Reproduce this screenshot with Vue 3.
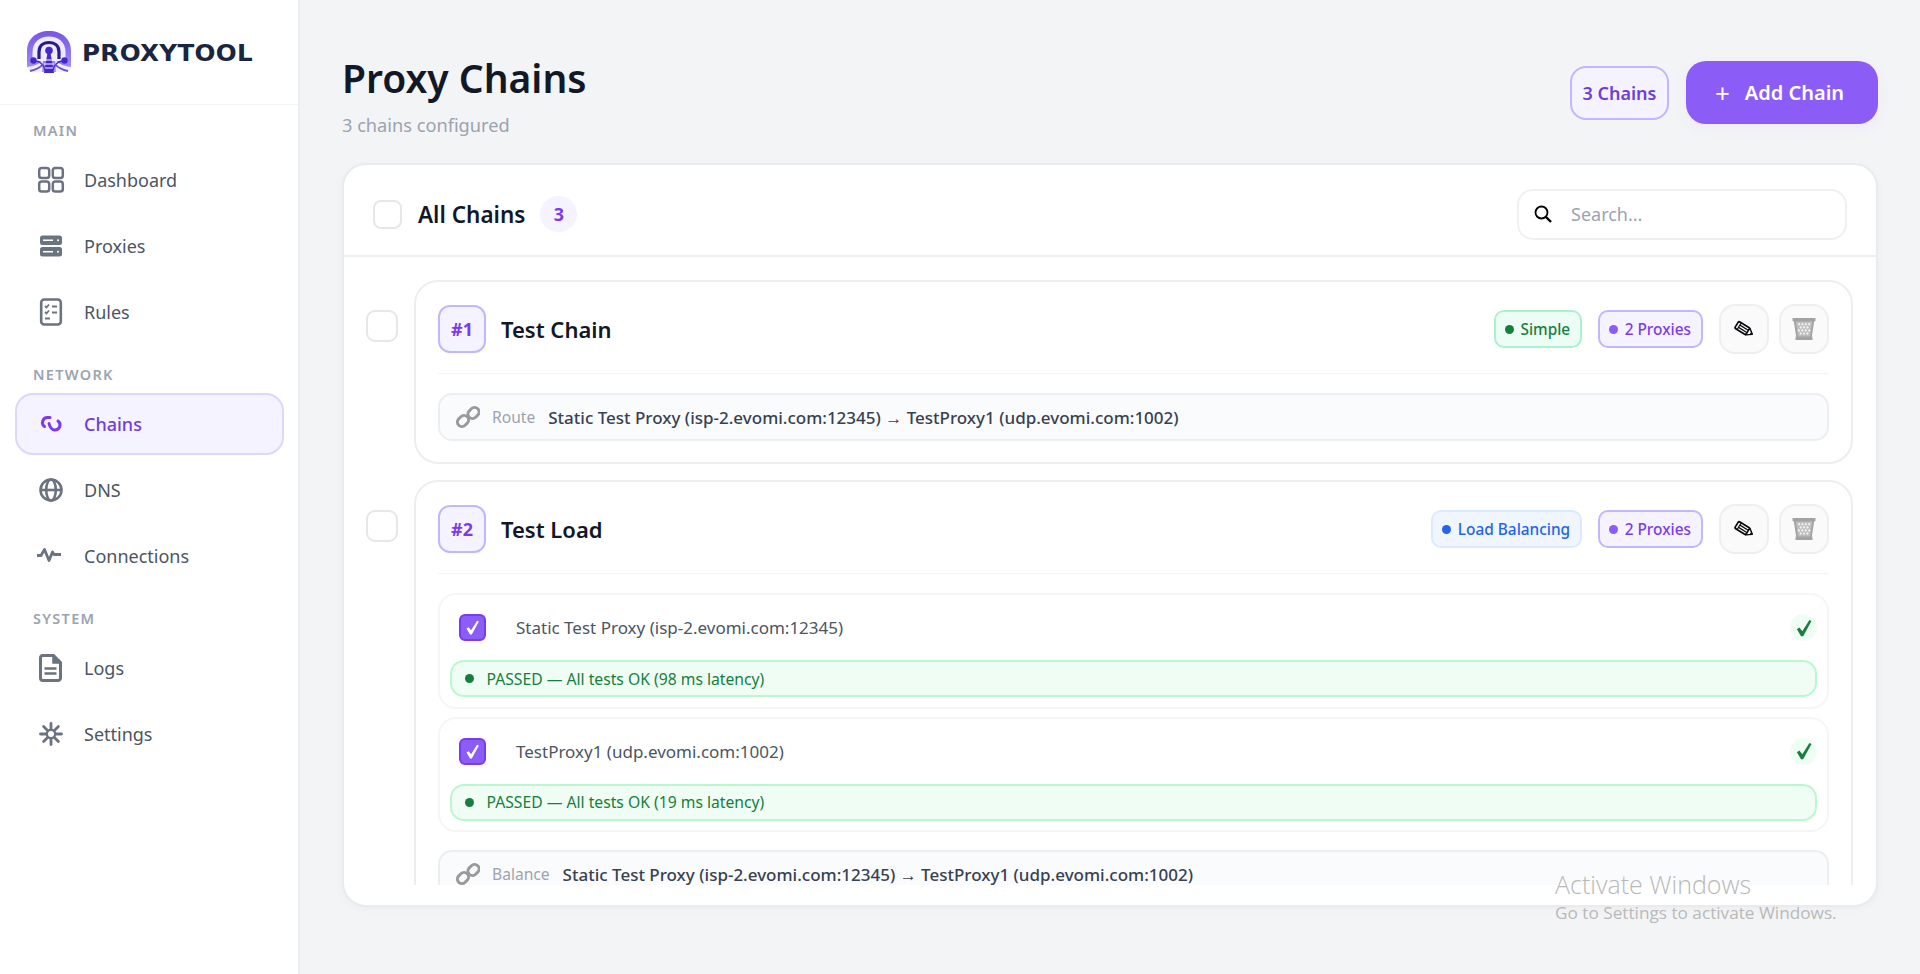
<script setup>
const navGroups = [
  {
    label: 'Main',
    items: [
      { name: 'Dashboard', icon: 'dashboard' },
      { name: 'Proxies', icon: 'proxies' },
      { name: 'Rules', icon: 'rules' },
    ],
  },
  {
    label: 'Network',
    items: [
      { name: 'Chains', icon: 'chains', active: true },
      { name: 'DNS', icon: 'dns' },
      { name: 'Connections', icon: 'connections' },
    ],
  },
  {
    label: 'System',
    items: [
      { name: 'Logs', icon: 'logs' },
      { name: 'Settings', icon: 'settings' },
    ],
  },
];

const proxies = [
  { name: 'Static Test Proxy (isp-2.evomi.com:12345)', latency: 98 },
  { name: 'TestProxy1 (udp.evomi.com:1002)', latency: 19 },
];

// white lattice of the bin, one diamond per grid cell
const binDiamonds = [];
for (let row = 0; row < 4; row++) {
  for (let col = 0; col < 4 - (row % 2); col++) {
    const x = 7 + col * 3.4 + (row % 2) * 1.7;
    const y = 7.2 + row * 3.1;
    binDiamonds.push(`M${x} ${y - 1.6}l1.300 1.600-1.300 1.600-1.300-1.600z`);
  }
}
</script>

<template>
  <div class="layout">
    <aside class="sidebar">
      <div class="brand">
        <svg class="logo" viewBox="0 0 44 42">
          <defs>
            <linearGradient id="logoFill" x1="0" y1="0" x2="0" y2="1">
              <stop offset="0" stop-color="#7656e4" />
              <stop offset="1" stop-color="#a68ffb" />
            </linearGradient>
          </defs>
          <path d="M0 20C0 8 9 0 22 0s22 8 22 20v14c0 4-3 7-7 7H7c-4 0-7-3-7-7z" fill="url(#logoFill)" />
          <path d="M5.500 30v-9C5.500 11 13 5.500 22 5.500S38.500 11 38.500 21v9z" fill="#efeaff" />
          <path d="M12 28v-7c0-6 4-9.500 10-9.500S32 15 32 21v7" fill="none" stroke="#251c8e" stroke-width="3.200" />
          <circle cx="22" cy="19.500" r="3.800" fill="#4529c8" />
          <path d="M20.500 22l-3.500 20h10l-3.500-20z" fill="#4529c8" />
          <path d="M18 29h8M17 33h10M16 37h12" stroke="#fff" stroke-width="1" />
          <path d="M0 36c8-1 13-3 16-8l-1 14H3z" fill="#fff" opacity="0.85" />
          <path d="M44 36c-8-1-13-3-16-8l1 14h12z" fill="#fff" opacity="0.85" />
          <path d="M8 30c5 0 8 3 10 9M36 30c-5 0-8 3-10 9" fill="none" stroke="#4529c8" stroke-width="1.500" />
          <path d="M3 40c5-1 10-3 13-7M41 40c-5-1-10-3-13-7" fill="none" stroke="#6a4fe0" stroke-width="1.800" />
          <circle cx="6.500" cy="29.500" r="3.200" fill="#4529c8" />
          <circle cx="37.500" cy="29.500" r="3.200" fill="#4529c8" />
        </svg>
        <span class="wordmark">PROXYTOOL</span>
      </div>

      <nav class="nav">
        <section v-for="group in navGroups" :key="group.label" class="nav-group">
          <h2 class="nav-label">{{ group.label }}</h2>
          <a
            v-for="item in group.items"
            :key="item.name"
            class="nav-item"
            :class="{ active: item.active }"
          >
            <svg class="nav-icon" viewBox="0 0 28 28">
              <g v-if="item.icon === 'dashboard'" fill="none" stroke="currentColor" stroke-width="2.500">
                <rect x="2.200" y="2" width="10" height="10" rx="2.600" />
                <rect x="15.800" y="2" width="10" height="10" rx="2.600" />
                <rect x="2.200" y="15.600" width="10" height="10" rx="2.600" />
                <rect x="15.800" y="15.600" width="10" height="10" rx="2.600" />
              </g>
              <g v-else-if="item.icon === 'proxies'">
                <rect x="3" y="3.500" width="22" height="9.500" rx="2.500" fill="currentColor" />
                <rect x="3" y="15" width="22" height="9.500" rx="2.500" fill="currentColor" />
                <path d="M6 8.200h10M6 19.800h10" stroke="#fff" stroke-width="1.400" />
                <circle cx="21" cy="8.200" r="1" fill="#fff" />
                <circle cx="21" cy="19.800" r="1" fill="#fff" />
              </g>
              <g v-else-if="item.icon === 'rules'" fill="none" stroke="currentColor">
                <rect x="4.200" y="1.500" width="19.600" height="25" rx="3" stroke-width="2.600" />
                <path d="M8 8l1.500 1.500L12 6.500M15 8.500h5M8 14l1.500 1.500L12 12.500M15 14.500h5M8 20.500h5" stroke-width="1.800" />
              </g>
              <g v-else-if="item.icon === 'chains'" fill="none" stroke="currentColor" stroke-width="3" stroke-linecap="round">
                <path d="M13 7.500h-2.500a5 5 0 0 0-3 9" />
                <path d="M12 13.500c1 4 3 6.500 6 6.500a5 5 0 0 0 3-9" />
              </g>
              <g v-else-if="item.icon === 'dns'" fill="none" stroke="currentColor" stroke-width="2.600">
                <circle cx="14" cy="14" r="10.500" />
                <ellipse cx="14" cy="14" rx="4.800" ry="10.500" />
                <path d="M3.500 14h21" />
              </g>
              <path
                v-else-if="item.icon === 'connections'"
                d="M-1 14.500h5l3.500-6 4.500 11 3.500-8.500 1.500 2.500h7"
                fill="none"
                stroke="currentColor"
                stroke-width="2.800"
                stroke-linejoin="round"
                transform="translate(0 -1)"
              />
              <g v-else-if="item.icon === 'logs'">
                <path d="M6 1.500h10.500l7 7V24a2.500 2.500 0 0 1-2.500 2.500H6A2.500 2.500 0 0 1 3.500 24V4A2.500 2.500 0 0 1 6 1.500z" fill="none" stroke="currentColor" stroke-width="3" />
                <path d="M16 2v7h7" fill="currentColor" stroke="currentColor" stroke-width="1.500" />
                <path d="M7.500 14.500h12M7.500 19.500h12" stroke="currentColor" stroke-width="2.400" />
              </g>
              <g v-else-if="item.icon === 'settings'" fill="none" stroke="currentColor" stroke-linecap="round">
                <circle cx="14" cy="14" r="4.200" stroke-width="2.400" />
                <path d="M14 3.500v5M14 19.500v5M3.500 14h5M19.500 14h5M6.600 6.600l3.500 3.500M17.900 17.900l3.500 3.500M21.400 6.600l-3.500 3.500M10.100 17.900l-3.500 3.500" stroke-width="2.800" />
              </g>
            </svg>
            <span>{{ item.name }}</span>
          </a>
        </section>
      </nav>
    </aside>

    <main class="main">
      <header class="page-head">
        <div>
          <h1>Proxy Chains</h1>
          <p>3 chains configured</p>
        </div>
        <div class="head-actions">
          <span class="count-pill">3 Chains</span>
          <button class="add-btn" type="button"><span class="plus">+</span> Add Chain</button>
        </div>
      </header>

      <section class="panel">
        <div class="panel-head">
          <span class="box"></span>
          <h2>All Chains</h2>
          <span class="panel-count">3</span>
          <label class="search">
            <svg viewBox="0 0 20 20" class="search-icon">
              <circle cx="8.500" cy="8.500" r="6" fill="none" stroke="#000" stroke-width="1.800" />
              <path d="M13 13l5 5" stroke="#000" stroke-width="2.400" />
            </svg>
            <input type="text" placeholder="Search..." />
          </label>
        </div>

        <div class="chain-list">
          <div class="chain-row">
            <span class="box chain-box"></span>
            <article class="chain">
              <div class="chain-head">
                <span class="chain-num">#1</span>
                <h3>Test Chain</h3>
                <span class="tag tag-green"><i></i>Simple</span>
                <span class="tag tag-purple"><i></i>2 Proxies</span>
                <button class="act" type="button">
                  <svg class="pencil" viewBox="0 0 24 24"><use href="#pencil" /></svg>
                </button>
                <button class="act" type="button">
                  <svg viewBox="0 0 24 24"><use href="#trash" /></svg>
                </button>
              </div>
              <div class="route">
                <svg class="link-icon" viewBox="0 0 24 24"><use href="#link" /></svg>
                <span class="route-label">Route</span>
                <span class="route-text">Static Test Proxy (isp-2.evomi.com:12345) <b>→</b> TestProxy1 (udp.evomi.com:1002)</span>
              </div>
            </article>
          </div>

          <div class="chain-row">
            <span class="box chain-box"></span>
            <article class="chain">
              <div class="chain-head">
                <span class="chain-num">#2</span>
                <h3>Test Load</h3>
                <span class="tag tag-blue"><i></i>Load Balancing</span>
                <span class="tag tag-purple"><i></i>2 Proxies</span>
                <button class="act" type="button">
                  <svg class="pencil" viewBox="0 0 24 24"><use href="#pencil" /></svg>
                </button>
                <button class="act" type="button">
                  <svg viewBox="0 0 24 24"><use href="#trash" /></svg>
                </button>
              </div>

              <div class="proxy-list">
                <div v-for="proxy in proxies" :key="proxy.name" class="proxy">
                  <div class="proxy-top">
                    <span class="proxy-check">
                      <svg viewBox="0 0 24 24"><use href="#tick" /></svg>
                    </span>
                    <span class="proxy-name">{{ proxy.name }}</span>
                    <span class="proxy-ok">
                      <svg viewBox="0 0 24 24"><use href="#tick" /></svg>
                    </span>
                  </div>
                  <div class="passed"><i></i>PASSED — All tests OK ({{ proxy.latency }} ms latency)</div>
                </div>
              </div>

              <div class="route route-balance">
                <svg class="link-icon" viewBox="0 0 24 24"><use href="#link" /></svg>
                <span class="route-label">Balance</span>
                <span class="route-text">Static Test Proxy (isp-2.evomi.com:12345) <b>→</b> TestProxy1 (udp.evomi.com:1002)</span>
              </div>
            </article>
          </div>
        </div>
      </section>
    </main>

    <svg class="defs" aria-hidden="true">
      <defs>
        <g id="pencil">
          <g transform="rotate(32 12 12)">
            <rect x="1.500" y="7.500" width="15" height="9" rx="1.500" fill="#fff" stroke="#0b0b0f" stroke-width="2" />
            <path d="M4.800 7.500v9M5 10.500h11.500M5 13.500h11.500" stroke="#0b0b0f" stroke-width="1.400" />
            <path d="M16.500 7.500l6 4.500-6 4.500z" fill="#fff" stroke="#0b0b0f" stroke-width="1.600" stroke-linejoin="round" />
            <path d="M20 10.200l3 1.800-3 1.800z" fill="#0b0b0f" />
          </g>
        </g>
        <g id="trash">
          <path d="M.5 1h23v3.200h-1.300l-2.400 15.600h.7V23H3.500v-3.200h.7L1.800 4.200H.5z" fill="#a3a3a3" />
          <path d="M3.800 4.500l2.200 15h12l2.200-15z" fill="#bdbdbd" />
          <path v-for="d in binDiamonds" :key="d" :d="d" fill="#f1f1f1" />
        </g>
        <g id="link" fill="none" stroke="#9a9a9a" stroke-width="3">
          <rect x="13" y="2" width="9" height="12" rx="4.500" transform="rotate(45 17.500 8)" />
          <rect x="2.500" y="10" width="9" height="12" rx="4.500" transform="rotate(45 7 16)" />
        </g>
        <path id="tick" d="M3.500 13.500l3-2 3.500 4.500L18.500 2.500l2.500 1L11 22H8.500z" fill="currentColor" />
      </defs>
    </svg>

    <div class="activate">
      <strong>Activate Windows</strong>
      <span>Go to Settings to activate Windows.</span>
    </div>
  </div>
</template>

<style>
html,
body {
  margin: 0;
  background: #f3f4f6;
}
</style>

<style scoped>
* {
  box-sizing: border-box;
}

.layout {
  position: relative;
  display: flex;
  height: 974px;
  overflow: hidden;
  background: #f3f4f6;
  color: #111827;
  font-family: "Noto Sans", "Open Sans", sans-serif;
}

.defs {
  position: absolute;
  width: 0;
  height: 0;
}

.sidebar {
  flex: 0 0 300px;
  background: #fff;
  border-right: 2px solid #eceef1;
}

.brand {
  display: flex;
  align-items: center;
  gap: 11px;
  height: 105px;
  padding: 0 27px;
  border-bottom: 1px solid #f3f4f6;
}

.logo {
  width: 44px;
  height: 42px;
  flex: none;
}

.wordmark {
  margin-top: 2px;
  font-family: "DejaVu Sans", sans-serif;
  font-size: 23px;
  font-weight: 700;
  letter-spacing: 0.3px;
  color: #1a2540;
  transform: scaleX(1.07);
  transform-origin: left center;
}

.nav {
  display: flex;
  flex-direction: column;
  padding: 16px 14px 16px 15px;
  gap: 5px;
}

.nav-group {
  display: flex;
  flex-direction: column;
  gap: 4px;
}

.nav-group + .nav-group {
  margin-top: 17px;
}

.nav-label {
  margin: 0 0 6px;
  padding: 0 18px;
  height: 18px;
  line-height: 18px;
  font-size: 14.500px;
  font-weight: 600;
  letter-spacing: 1.300px;
  text-transform: uppercase;
  color: #9ca3af;
}

.nav-item {
  display: flex;
  align-items: center;
  gap: 19px;
  height: 62px;
  padding: 0 20px;
  border: 2px solid transparent;
  border-radius: 18px;
  font-size: 18px;
  color: #4b5563;
}

.nav-item.active {
  background: #f5f3ff;
  border-color: #ddd6fe;
  color: #6d3fd8;
  font-weight: 500;
}

.nav-icon {
  width: 28px;
  height: 28px;
  flex: none;
  color: #6b7280;
}

.nav-item.active .nav-icon {
  color: #7c3aed;
}

.main {
  flex: 1;
  min-width: 0;
  padding: 40px 0 0 42px;
}

.page-head {
  display: flex;
  justify-content: space-between;
  align-items: flex-start;
  width: 1536px;
  height: 123px;
}

.page-head h1 {
  margin: 12px 0 0;
  font-size: 39px;
  line-height: 52px;
  font-weight: 600;
  color: #111827;
}

.page-head p {
  margin: 9px 0 0;
  font-size: 18.200px;
  line-height: 24px;
  color: #9ca3af;
}

.head-actions {
  display: flex;
  align-items: center;
  gap: 17px;
  margin-top: 21px;
}

.count-pill {
  display: flex;
  align-items: center;
  justify-content: center;
  width: 99px;
  height: 54px;
  border: 2px solid #c4b5fd;
  border-radius: 16px;
  background: #f5f3ff;
  color: #6d3fd8;
  font-size: 18px;
  font-weight: 600;
}

.add-btn {
  display: flex;
  align-items: center;
  justify-content: center;
  gap: 15px;
  width: 192px;
  height: 63px;
  padding: 0 5px 0 0;
  border: 0;
  border-radius: 20px;
  background: #8b5cf6;
  color: #fff;
  font: inherit;
  font-size: 20px;
  font-weight: 600;
  box-shadow: 0 4px 14px rgba(139, 92, 246, 0.06);
}

.plus {
  font-size: 26px;
  font-weight: 400;
  line-height: 1;
}

.panel {
  width: 1536px;
  height: 744px;
  background: #fff;
  border: 2px solid #e9ebee;
  border-radius: 24px;
  box-shadow: 0 2px 8px rgba(0, 0, 0, 0.03);
  padding-bottom: 20px;
  overflow: hidden;
}

.panel-head {
  display: flex;
  align-items: center;
  height: 92px;
  padding: 8px 29px 0;
  border-bottom: 2px solid #eceef1;
}

.box {
  display: block;
  flex: none;
  width: 29px;
  height: 29px;
  border: 2px solid #e5e7eb;
  border-radius: 8px;
  background: #fff;
}

.panel-head h2 {
  margin: 0 0 0 16px;
  font-size: 22.500px;
  font-weight: 600;
  color: #111827;
}

.panel-count {
  display: flex;
  align-items: center;
  justify-content: center;
  width: 37px;
  height: 36px;
  margin-left: 15px;
  border-radius: 50%;
  background: #f5f3ff;
  color: #7c3aed;
  font-size: 18px;
  font-weight: 700;
}

.search {
  display: flex;
  align-items: center;
  gap: 16px;
  width: 330px;
  height: 51px;
  margin-left: auto;
  padding: 0 14px;
  border: 2px solid #eef0f2;
  border-radius: 16px;
}

.search-icon {
  width: 20px;
  height: 20px;
  flex: none;
}

.search input {
  flex: 1;
  min-width: 0;
  border: 0;
  outline: 0;
  background: transparent;
  font: inherit;
  font-size: 18px;
}

.search input::placeholder {
  color: #9ca3af;
}

.chain-list {
  display: flex;
  flex-direction: column;
  gap: 16px;
  height: 628px;
  padding: 23px 23px 0 22px;
  overflow: hidden;
}

.chain-row {
  display: flex;
  align-items: flex-start;
  gap: 16px;
}

.chain-box {
  width: 32px;
  height: 32px;
  margin-top: 30px;
  border-radius: 9px;
}

.chain {
  flex: 1;
  min-width: 0;
  padding: 23px 22px 21px;
  border: 2px solid #eceef1;
  border-radius: 24px;
  background: #fff;
}

.chain-head {
  display: flex;
  align-items: center;
  height: 69px;
  padding-bottom: 20px;
  border-bottom: 1px solid #f3f4f6;
}

.chain-num {
  display: flex;
  align-items: center;
  justify-content: center;
  width: 48px;
  height: 48px;
  border: 2px solid #c4b5fd;
  border-radius: 12px;
  background: #f5f3ff;
  color: #7c3aed;
  font-size: 18px;
  font-weight: 700;
}

.chain-head h3 {
  flex: 1;
  margin: 0 0 0 15px;
  font-size: 22px;
  font-weight: 600;
  color: #111827;
}

.tag {
  display: flex;
  align-items: center;
  gap: 6.500px;
  height: 38px;
  margin-right: 16px;
  padding: 0 10px 0 9px;
  border: 2px solid;
  border-radius: 10px;
  font-size: 15.400px;
  font-weight: 500;
}

.tag i {
  width: 9px;
  height: 9px;
  border-radius: 50%;
  background: currentColor;
}

.tag-green {
  background: #ecfdf5;
  border-color: #a7f3d0;
  color: #15803d;
}

.tag-purple {
  background: #f5f3ff;
  border-color: #c4b5fd;
  color: #7c3aed;
}

.tag-purple i {
  background: #8b5cf6;
}

.tag-blue {
  background: #eff6ff;
  border-color: #dbeafe;
  color: #2563eb;
}

.act {
  display: flex;
  align-items: center;
  justify-content: center;
  width: 50px;
  height: 50px;
  padding: 0;
  border: 2px solid #eeeff1;
  border-radius: 16px;
  background: #fafafa;
}

.act + .act {
  margin-left: 10px;
}

.act svg {
  width: 24px;
  height: 24px;
}

.act svg.pencil {
  width: 21px;
  height: 21px;
  margin-left: 1px;
}

.route {
  display: flex;
  align-items: center;
  height: 48px;
  margin-top: 19px;
  padding: 0 16px;
  border: 2px solid #eceef1;
  border-radius: 14px;
  background: #fafbfc;
  white-space: nowrap;
}

.link-icon {
  width: 24px;
  height: 24px;
  flex: none;
}

.route-label {
  margin-left: 12px;
  font-size: 15.600px;
  color: #9ca3af;
}

.route-text {
  margin-left: 13px;
  font-size: 17px;
  font-weight: 500;
  color: #374151;
}

.route-text b {
  font-family: "Liberation Sans", sans-serif;
  font-weight: 400;
}

.proxy-list {
  display: flex;
  flex-direction: column;
  gap: 8px;
  margin-top: 19px;
}

.proxy {
  height: 115.500px;
  padding: 0 10px;
  border: 2px solid #f6f6f7;
  border-radius: 18px;
}

.proxy-top {
  display: flex;
  align-items: center;
  height: 65px;
  padding-left: 9px;
}

.proxy-check {
  display: flex;
  align-items: center;
  justify-content: center;
  width: 27px;
  height: 27px;
  border: 2px solid #7c3aed;
  border-radius: 6px;
  background: #8b5cf6;
  color: #fff;
}

.proxy-check svg {
  width: 17px;
  height: 17px;
}

.proxy-name {
  flex: 1;
  margin-left: 30px;
  font-size: 17px;
  color: #4b5563;
}

.proxy-ok {
  display: flex;
  align-items: center;
  justify-content: center;
  width: 27px;
  height: 27px;
  border-radius: 50%;
  background: #f0fdf4;
  color: #15803d;
}

.proxy-ok svg {
  width: 20px;
  height: 20px;
}

.passed {
  display: flex;
  align-items: center;
  gap: 12.500px;
  height: 37px;
  padding: 0 13px;
  border: 2px solid #bbf7d0;
  border-radius: 14px;
  background: #f0fdf4;
  color: #15803d;
  font-size: 15.700px;
}

.passed i {
  width: 9px;
  height: 9px;
  border-radius: 50%;
  background: #15803d;
}

.route-balance {
  margin-top: 18px;
}

.activate {
  position: absolute;
  left: 1555px;
  top: 867px;
  display: flex;
  flex-direction: column;
  font-family: "Open Sans", sans-serif;
  color: #b9b9b9;
  pointer-events: none;
}

.activate strong {
  font-size: 25px;
  font-weight: 300;
  line-height: 34px;
}

.activate span {
  font-size: 17.200px;
  line-height: 24px;
}
</style>
